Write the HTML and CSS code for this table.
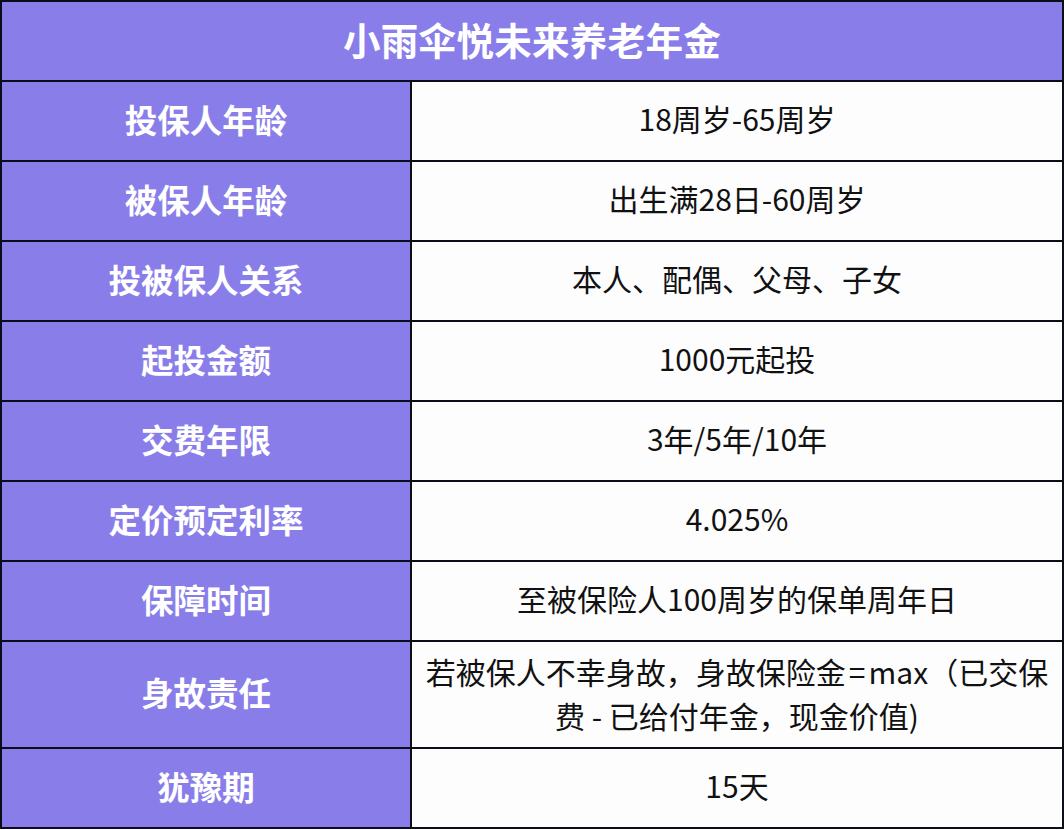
FILE: index.html
```html
<!DOCTYPE html>
<html lang="zh-CN">
<head>
<meta charset="utf-8">
<title>小雨伞悦未来养老年金</title>
<link rel="stylesheet" href="styles.css">
</head>
<body>
<table class="info">
  <colgroup>
    <col class="col-key">
    <col class="col-val">
  </colgroup>
  <thead>
    <tr class="row head"><th colspan="2" class="title">小雨伞悦未来养老年金</th></tr>
  </thead>
  <tbody>
    <tr class="row"><th class="key">投保人年龄</th><td class="val">18周岁-65周岁</td></tr>
    <tr class="row"><th class="key">被保人年龄</th><td class="val">出生满28日-60周岁</td></tr>
    <tr class="row"><th class="key">投被保人关系</th><td class="val">本人、配偶、父母、子女</td></tr>
    <tr class="row"><th class="key">起投金额</th><td class="val">1000元起投</td></tr>
    <tr class="row"><th class="key">交费年限</th><td class="val">3年/5年/10年</td></tr>
    <tr class="row"><th class="key">定价预定利率</th><td class="val">4.025%</td></tr>
    <tr class="row"><th class="key">保障时间</th><td class="val">至被保险人100周岁的保单周年日</td></tr>
    <tr class="row tall"><th class="key">身故责任</th><td class="val multi">若被保人不幸身故，身故保险金<span class="eq">=</span>max（已交保<br>费 - 已给付年金，现金价值)</td></tr>
    <tr class="row"><th class="key">犹豫期</th><td class="val">15天</td></tr>
  </tbody>
</table>
</body>
</html>
```

FILE: styles.css
```css
html, body {
  margin: 0;
  padding: 0;
  background: #ffffff;
}

body {
  font-family: "Noto Sans CJK SC", "Noto Sans", sans-serif;
  width: 1064px;
  height: 830px;
  overflow: hidden;
}

.info {
  border-collapse: collapse;
  width: 1062px;
  margin: 0;
  border: 2px solid #0d0d18;
  table-layout: fixed;
}

.col-key {
  width: 410px;
}

.col-val {
  width: 652px;
}

.info th,
.info td {
  border: 2px solid #0d0d18;
  padding: 0 4px 6px;
  text-align: center;
  vertical-align: middle;
}

.row {
  height: 80px;
}

.row.tall {
  height: 107px;
}

.info .title {
  background: #897ee9;
  color: #ffffff;
  font-weight: 700;
  font-size: 37.5px;
  letter-spacing: 0.3px;
  padding-bottom: 5px;
}

.key {
  background: #897ee9;
  color: #ffffff;
  font-weight: 700;
  font-size: 32.5px;
}

.val {
  background: #fdfdfe;
  color: #111111;
  font-weight: 400;
  font-size: 30px;
  line-height: 40px;
}

.info .val.multi {
  line-height: 44px;
  padding: 0 2px 4px;
  white-space: nowrap;
}

.eq {
  margin: 0 3px;
}
```
